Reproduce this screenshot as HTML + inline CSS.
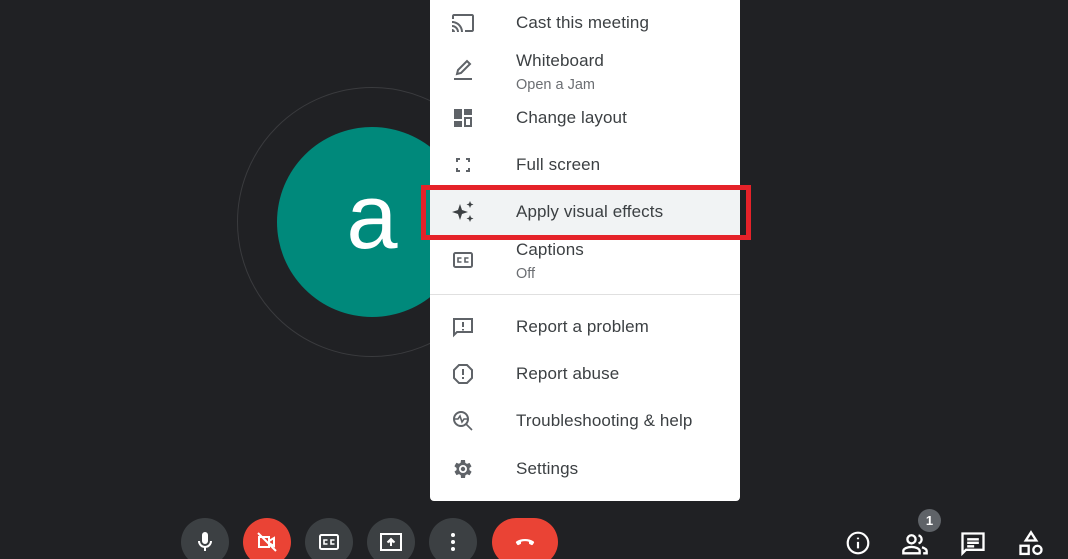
<!DOCTYPE html>
<html><head><meta charset="utf-8"><style>
*{margin:0;padding:0;box-sizing:border-box}
html,body{width:1068px;height:559px;overflow:hidden}
body{background:#202124;position:relative;font-family:"Liberation Sans",Roboto,sans-serif}
.ring{position:absolute;left:237px;top:87px;width:270px;height:270px;border-radius:50%;border:1.5px solid #3a3b3e}
.av{position:absolute;left:277px;top:127px;width:190px;height:190px;border-radius:50%;background:#00897b;color:#fff;font-size:92px;text-align:center;line-height:180px}
.menu{position:absolute;left:430px;top:0;width:310px;height:501px;background:#fff;border-radius:0 0 4px 4px}
.it{position:absolute;left:86px;font-size:17px;color:#3c4043;transform:translateY(-50%);white-space:nowrap;letter-spacing:0.1px}
.sub{position:absolute;left:86px;font-size:14.5px;color:#6b6e72;transform:translateY(-50%)}
.ic{position:absolute;left:21px;width:24px;height:24px;transform:translateY(-50%)}
.hl{position:absolute;left:0;top:189px;width:310px;height:47px;background:#f1f3f4}
.div{position:absolute;left:0;top:294px;width:310px;height:1px;background:#e0e0e0}
.red{position:absolute;left:421px;top:185px;width:330px;height:55px;border:5px solid #e52229}
.btn{position:absolute;top:518px;width:48px;height:48px;border-radius:50%;background:#3c4043}
.btn svg{position:absolute;left:12px;top:12px}
.rt{position:absolute;top:530px}
</style></head><body>
<div class="ring"></div>
<div class="av">a</div>
<div class="menu">
<div class="hl"></div>
<svg class="ic" style="top:23px" viewBox="0 0 24 24" fill="#5f6368"><path d="M21 3H3c-1.1 0-2 .9-2 2v3h2V5h18v14h-7v2h7c1.1 0 2-.9 2-2V5c0-1.1-.9-2-2-2zM1 18v3h3c0-1.66-1.34-3-3-3zm0-4v2c2.76 0 5 2.24 5 5h2c0-3.87-3.13-7-7-7zm0-4v2c4.97 0 9 4.03 9 9h2c0-6.08-4.93-11-11-11z"/></svg>
<div class="it" style="top:23px">Cast this meeting</div>
<svg class="ic" style="top:70px" viewBox="0 0 24 24" fill="none" stroke="#5f6368" stroke-width="2"><path d="M6 16l1-4 9-9 3 3-9 9-4 1z"/><path d="M3 21h18"/></svg>
<div class="it" style="top:61px">Whiteboard</div>
<div class="sub" style="top:85px">Open a Jam</div>
<svg class="ic" style="top:118px" viewBox="0 0 24 24" fill="#5f6368"><path d="M3 3h8v10H3zM13 3h8v6h-8zM13 11h8v10h-8zm2 2v6h4v-6zM3 15h8v6H3z"/></svg>
<div class="it" style="top:118px">Change layout</div>
<svg class="ic" style="top:165px" viewBox="0 0 24 24" fill="#5f6368"><path d="M5 5h4v2H7v2H5zM15 5h4v4h-2V7h-2zM5 15h2v2h2v2H5zM17 15h2v4h-4v-2h2z"/></svg>
<div class="it" style="top:165px">Full screen</div>
<svg class="ic" style="top:212px" viewBox="0 0 24 24" fill="#3c4043"><path d="M9 4l2 6 6 2-6 2-2 6-2-6-6-2 6-2zM19 1l1 2.5 2.5 1-2.5 1L19 8l-1-2.5-2.5-1 2.5-1zM19 15l1 2.5 2.5 1-2.5 1L19 22l-1-2.5-2.5-1 2.5-1z"/></svg>
<div class="it" style="top:212px">Apply visual effects</div>
<svg class="ic" style="top:260px" viewBox="0 0 24 24" fill="none" stroke="#5f6368" stroke-width="2"><rect x="3" y="5" width="18" height="14" rx="1.5"/><path d="M10.5 10H7v4h3.5M17.5 10H14v4h3.5" stroke-width="1.6"/></svg>
<div class="it" style="top:250px">Captions</div>
<div class="sub" style="top:274px">Off</div>
<div class="div"></div>
<svg class="ic" style="top:327px" viewBox="0 0 24 24" fill="none" stroke="#5f6368" stroke-width="2"><path d="M3 4h18v13H6l-3 3z"/><path d="M12 7v5M12 14v1.5"/></svg>
<div class="it" style="top:327px">Report a problem</div>
<svg class="ic" style="top:374px" viewBox="0 0 24 24" fill="none" stroke="#5f6368" stroke-width="2"><path d="M8 3h8l5 5v8l-5 5H8l-5-5V8z"/><path d="M12 7v6M12 15v2"/></svg>
<div class="it" style="top:374px">Report abuse</div>
<svg class="ic" style="top:421px" viewBox="0 0 24 24" fill="none" stroke="#5f6368" stroke-width="2"><circle cx="10" cy="10" r="7"/><path d="M15 15l6 6M3 10h4l2-3 2 6 2-3h4" stroke-width="1.6"/></svg>
<div class="it" style="top:421px">Troubleshooting &amp; help</div>
<svg class="ic" style="top:469px" viewBox="0 0 24 24" fill="#5f6368"><path d="M19.4 13a7.5 7.5 0 000-2l2.1-1.6-2-3.5-2.5 1a7.3 7.3 0 00-1.7-1L15 3h-4l-.4 2.7a7.3 7.3 0 00-1.7 1l-2.5-1-2 3.5L6.6 11a7.5 7.5 0 000 2l-2.1 1.6 2 3.5 2.5-1c.5.4 1.1.7 1.7 1L11 21h4l.4-2.7c.6-.3 1.2-.6 1.7-1l2.5 1 2-3.5zM13 16a4 4 0 110-8 4 4 0 010 8z" transform="translate(-1 0)"/><circle cx="12" cy="12" r="2.2"/></svg>
<div class="it" style="top:469px">Settings</div>
</div>
<div class="red"></div>

<div class="btn" style="left:181px"><svg width="24" height="24" viewBox="0 0 24 24" fill="#fff"><path d="M12 14a3 3 0 003-3V5a3 3 0 00-6 0v6a3 3 0 003 3zm5-3a5 5 0 01-10 0H5a7 7 0 006 6.9V21h2v-3.1A7 7 0 0019 11z"/></svg></div>
<div class="btn" style="left:243px;background:#ea4335"><svg width="24" height="24" viewBox="0 0 24 24" fill="none" stroke="#fff" stroke-width="2"><path d="M4 7h10v10H4zM14 11l5-3v8l-5-3M3 3l18 18"/></svg></div>
<div class="btn" style="left:305px"><svg width="24" height="24" viewBox="0 0 24 24" fill="none" stroke="#fff" stroke-width="2"><rect x="3" y="5" width="18" height="14" rx="1.5"/><path d="M10.5 10H7v4h3.5M17.5 10H14v4h3.5" stroke-width="1.6"/></svg></div>
<div class="btn" style="left:367px"><svg width="24" height="24" viewBox="0 0 24 24" fill="none" stroke="#fff" stroke-width="2"><rect x="2" y="4" width="20" height="16"/><path d="M12 16V9M8.5 12.5L12 9l3.5 3.5" fill="#fff"/></svg></div>
<div class="btn" style="left:429px"><svg width="24" height="24" viewBox="0 0 24 24" fill="#fff"><circle cx="12" cy="5" r="2"/><circle cx="12" cy="12" r="2"/><circle cx="12" cy="19" r="2"/></svg></div>
<div class="btn" style="left:492px;width:66px;border-radius:24px;background:#ea4335"><svg style="left:21px" width="24" height="24" viewBox="0 0 24 24" fill="#fff"><path d="M12 9c-3.3 0-6.4.9-8.7 2.5-.4.3-.5.9-.3 1.3l1.3 1.9c.3.4.8.5 1.2.3l2.4-1.1.2-2.2c1.2-.4 2.5-.6 3.9-.6s2.7.2 3.9.6l.2 2.2 2.4 1.1c.4.2.9.1 1.2-.3l1.3-1.9c.2-.4.1-1-.3-1.3C18.4 9.9 15.3 9 12 9z"/></svg></div>

<svg class="rt" style="left:845px" width="26" height="26" viewBox="0 0 24 24" fill="none" stroke="#fff" stroke-width="2"><circle cx="12" cy="12" r="9.5"/><path d="M12 11v6M12 7v1.5"/></svg>
<div style="position:absolute;left:918px;top:509px;width:23px;height:23px;border-radius:50%;background:#5f6368;color:#fff;font-size:13px;font-weight:bold;text-align:center;line-height:23px">1</div>
<svg class="rt" style="left:901px" width="28" height="28" viewBox="0 0 24 24" fill="none" stroke="#fff" stroke-width="2"><circle cx="9" cy="8" r="3.5"/><path d="M2 20v-2c0-2 3.5-3.5 7-3.5s7 1.5 7 3.5v2z"/><path d="M15 4.6a3.5 3.5 0 010 6.8M18 14.8c2 .7 4 1.7 4 3.2v2h-3"/></svg>
<svg class="rt" style="left:959px" width="28" height="28" viewBox="0 0 24 24" fill="none" stroke="#fff" stroke-width="2"><path d="M3 3h18v14H6l-3 3z"/><path d="M7 8h10M7 11h10M7 14h6"/></svg>
<svg class="rt" style="left:1017px" width="28" height="28" viewBox="0 0 24 24" fill="none" stroke="#fff" stroke-width="2"><path d="M12 2l4.5 7h-9z"/><rect x="3" y="13.5" width="7" height="7"/><circle cx="17.5" cy="17" r="3.5"/></svg>
</body></html>
